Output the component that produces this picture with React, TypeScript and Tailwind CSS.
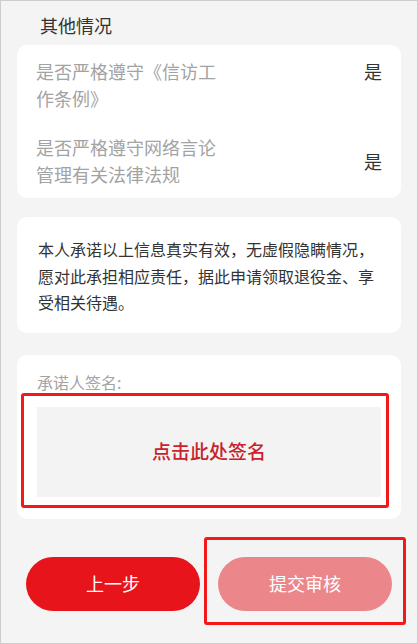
import React from "react";

const font = { fontFamily: '"Noto Sans CJK SC", "Noto Sans", sans-serif' };

export default function App() {
  return (
    <div
      className="relative w-[418px] h-[644px] overflow-hidden border border-[#cdcdcd] bg-[#f4f4f4]"
      style={font}
    >
      <div className="pl-[39px] pt-[13px] text-[18px] leading-[22px] text-[#333333]">其他情况</div>

      <div className="mx-[16px] mt-[9px] rounded-[10px] bg-white pl-[19px] pr-[19px] pt-[13px] pb-[10px]">
        <div className="flex items-start justify-between">
          <div className="w-[190px] text-[18px] leading-[27px] text-[#a3a3a3]">是否严格遵守《信访工作条例》</div>
          <div className="text-[18px] leading-[27px] text-[#333333]">是</div>
        </div>
        <div className="mt-[22px] flex items-center justify-between">
          <div className="w-[190px] text-[18px] leading-[27px] text-[#a3a3a3]">是否严格遵守网络言论管理有关法律法规</div>
          <div className="text-[18px] leading-[27px] text-[#333333]">是</div>
        </div>
      </div>

      <div className="mx-[16px] mt-[19px] rounded-[10px] bg-white pl-[21px] pr-[20px] pt-[19px] pb-[17px] text-[16px] leading-[26.5px] text-[#333333]">
        本人承诺以上信息真实有效，无虚假隐瞒情况，愿对此承担相应责任，据此申请领取退役金、享受相关待遇。
      </div>

      <div className="mx-[16px] mt-[22px] rounded-[10px] bg-white px-[20px] pt-[17px] pb-[22px]">
        <div className="text-[16px] leading-[20px] text-[#a3a3a3]">承诺人签名:</div>
        <div className="mt-[15px] flex h-[90px] items-center justify-center bg-[#f3f3f3] text-[19px] font-medium text-[#c8232c]">
          点击此处签名
        </div>
      </div>

      <div className="mt-[38px] flex gap-[18px] px-[25px]">
        <button className="h-[54px] flex-1 rounded-full bg-[#e8141c] text-[18px] text-white">上一步</button>
        <button className="h-[54px] flex-1 rounded-full bg-[#eb878b] text-[18px] text-white">提交审核</button>
      </div>

      <div className="pointer-events-none absolute left-[20px] top-[392px] h-[115px] w-[368px] rounded-[3px] border-[3px] border-[#f2191a]" />
      <div className="pointer-events-none absolute left-[203px] top-[536px] h-[88px] w-[202px] rounded-[3px] border-[3px] border-[#f2191a]" />
    </div>
  );
}
